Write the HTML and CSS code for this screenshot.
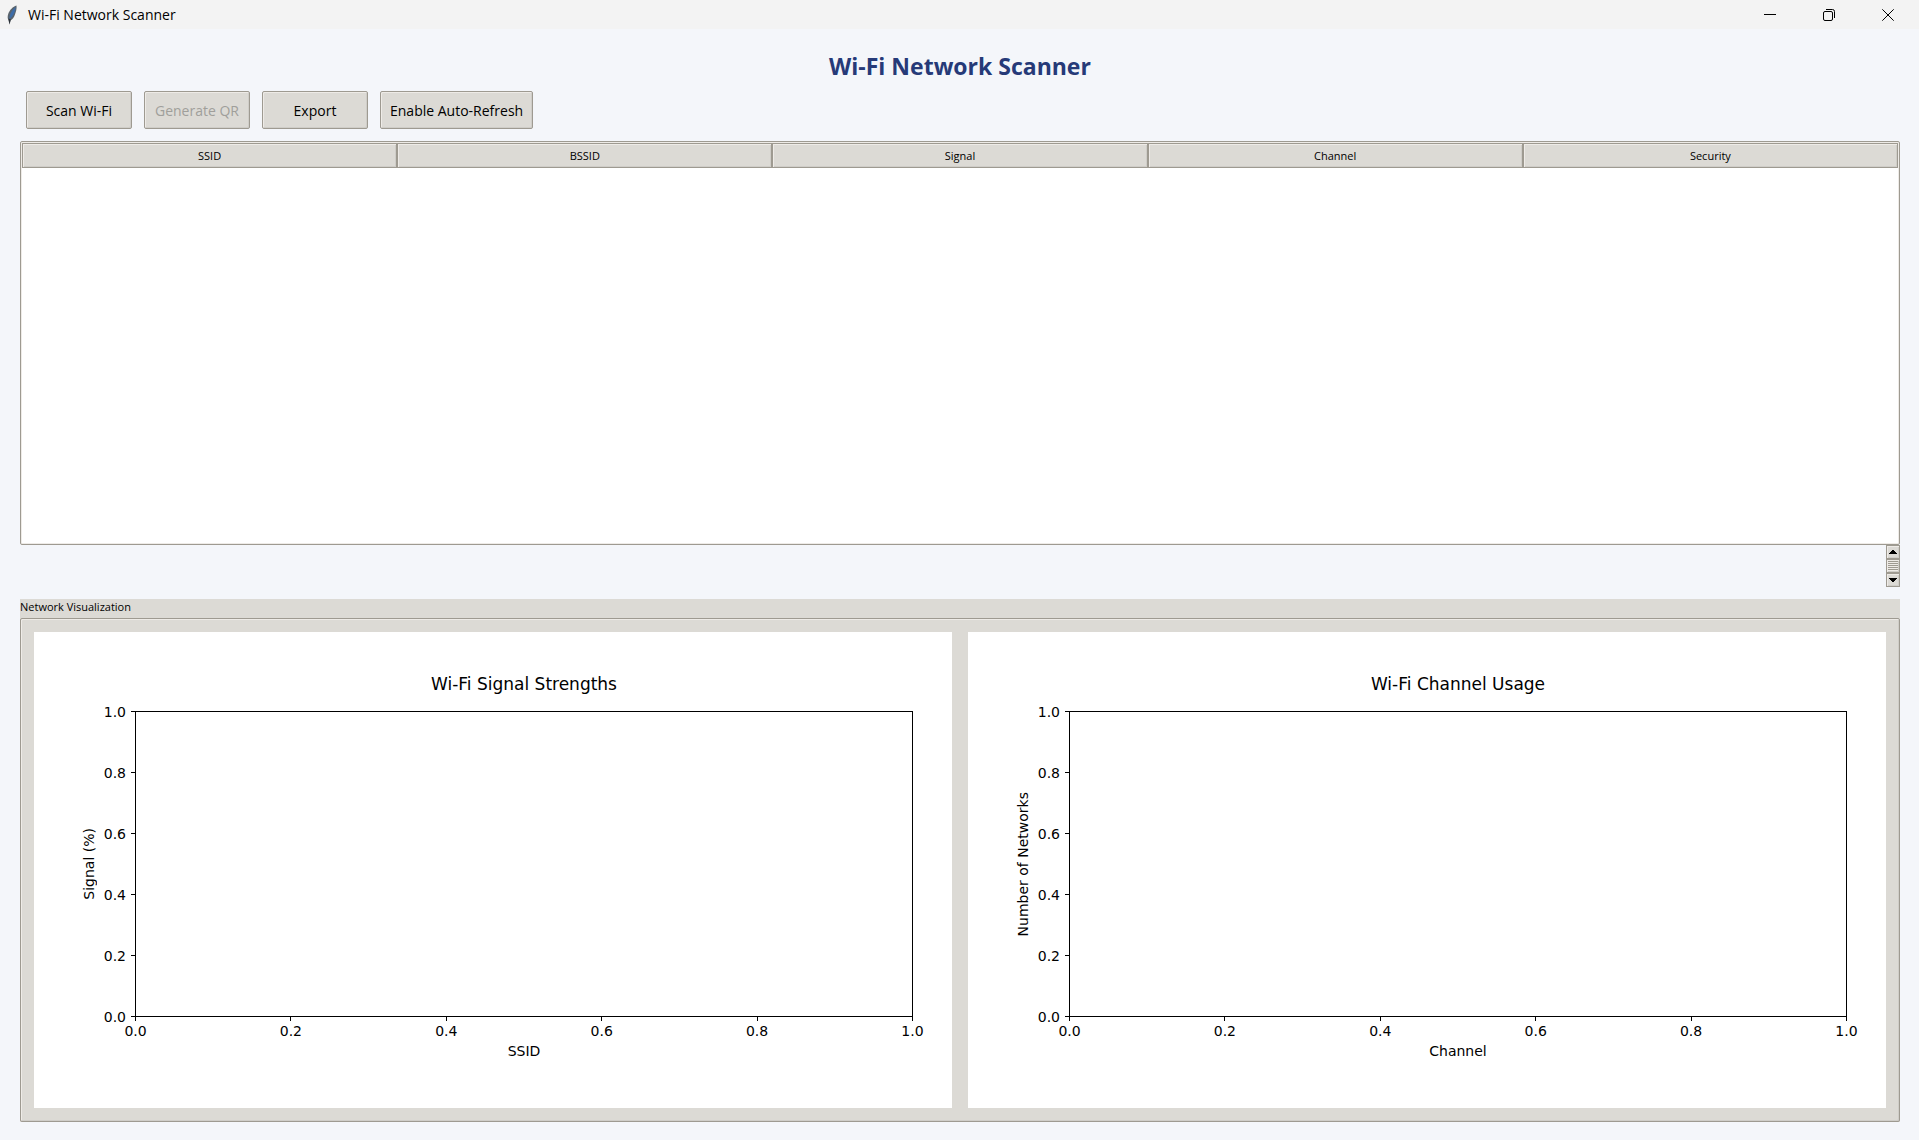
FILE: index.html
```html
<!DOCTYPE html>
<html lang="en">
<head>
<meta charset="utf-8">
<title>Wi-Fi Network Scanner</title>
<link rel="stylesheet" href="styles.css">
</head>
<body>
<header class="titlebar">
  <svg class="feather" width="12" height="20" viewBox="0 0 12 20" aria-hidden="true">
    <path d="M10.5 0.500C7 1.500 3.500 5 2.200 9C1.400 11.500 1.500 13.500 2.400 15L3.600 19.500L4.400 15.500C6.500 14.500 8 12.500 8.800 10C9.800 7 11 4 10.500 0.500Z" fill="#59636c"/>
    <path d="M9.500 2C7 4 4.800 7 3.800 10.500L3.400 14C5.500 13 7.200 10.500 8.200 8C9 6 9.800 4 9.500 2Z" fill="#3c6ca8"/>
    <path d="M2.400 13.500L3.600 19.500L4.800 14.500Z" fill="#2b3036"/>
  </svg>
  <span class="titlebar-text">Wi-Fi Network Scanner</span>
  <div class="window-controls">
    <button type="button" aria-label="Minimize"><svg width="12" height="12" viewBox="0 0 12 12"><path d="M0 5.500H12"/></svg></button>
    <button type="button" aria-label="Restore"><svg width="12" height="12" viewBox="0 0 12 12"><rect x="0.500" y="2.500" width="9" height="9" rx="1.500"/><path d="M3 0.500H9.500A2 2 0 0 1 11.500 2.500V9"/></svg></button>
    <button type="button" aria-label="Close"><svg width="12" height="12" viewBox="0 0 12 12"><path d="M0.300 0.300L11.700 11.700M11.700 0.300L0.300 11.700"/></svg></button>
  </div>
</header>
<main class="app">
  <h1 class="heading">Wi-Fi Network Scanner</h1>
  <div class="toolbar">
    <button type="button" class="tool">Scan Wi-Fi</button>
    <button type="button" class="tool" disabled>Generate QR</button>
    <button type="button" class="tool">Export</button>
    <button type="button" class="tool">Enable Auto-Refresh</button>
  </div>
  <div class="tree">
    <table class="networks">
      <thead>
        <tr><th scope="col">SSID</th><th scope="col">BSSID</th><th scope="col">Signal</th><th scope="col">Channel</th><th scope="col">Security</th></tr>
      </thead>
      <tbody></tbody>
    </table>
  </div>
  <div class="scrollbar">
    <button type="button" aria-label="Scroll up"><svg width="8" height="4" viewBox="0 0 8 4" shape-rendering="crispEdges"><path d="M3 0H5V1H6V2H7V3H8V4H0V3H1V2H2V1H3Z"/></svg></button>
    <div class="thumb"></div>
    <button type="button" aria-label="Scroll down"><svg width="8" height="4" viewBox="0 0 8 4" shape-rendering="crispEdges"><path d="M3 4H5V3H6V2H7V1H8V0H0V1H1V2H2V3H3Z"/></svg></button>
  </div>
  <section class="visualization">
    <h2 class="group-label">Network Visualization</h2>
    <div class="charts">
      <figure class="chart">
        <figcaption class="chart-title">Wi-Fi Signal Strengths</figcaption>
        <div class="y-label">Signal (%)</div>
        <ol class="y-ticks"><li>1.0</li><li>0.8</li><li>0.6</li><li>0.4</li><li>0.2</li><li>0.0</li></ol>
        <div class="axes"></div>
        <ol class="x-ticks"><li>0.0</li><li>0.2</li><li>0.4</li><li>0.6</li><li>0.8</li><li>1.0</li></ol>
        <div class="x-label">SSID</div>
      </figure>
      <figure class="chart">
        <figcaption class="chart-title">Wi-Fi Channel Usage</figcaption>
        <div class="y-label">Number of Networks</div>
        <ol class="y-ticks"><li>1.0</li><li>0.8</li><li>0.6</li><li>0.4</li><li>0.2</li><li>0.0</li></ol>
        <div class="axes"></div>
        <ol class="x-ticks"><li>0.0</li><li>0.2</li><li>0.4</li><li>0.6</li><li>0.8</li><li>1.0</li></ol>
        <div class="x-label">Channel</div>
      </figure>
    </div>
  </section>
</main>
</body>
</html>
```
FILE: styles.css
```css
:root {
  --face: #dcdad5;
  --line: #9e9a91;
  --light: #eeebe7;
  --dark: #cfcdc8;
}

* { box-sizing: border-box; }

body {
  margin: 0;
  min-height: 100vh;
  display: flex;
  flex-direction: column;
  background: #f4f6fa;
  color: #000;
  font-family: "Open Sans", "Noto Sans", sans-serif;
  font-size: 12px;
}

button { font: inherit; color: inherit; }

/* Window title bar */
.titlebar {
  display: flex;
  align-items: center;
  height: 29px;
  padding: 0 2px 0 6px;
  background: #f3f3f3;
}
.titlebar-text {
  margin-left: 10px;
  font-size: 14px;
  line-height: 28px;
}
.window-controls {
  display: flex;
  align-self: stretch;
  margin-left: auto;
}
.window-controls button {
  display: flex;
  align-items: center;
  justify-content: center;
  width: 59px;
  padding: 0;
  border: 0;
  background: none;
}
.window-controls svg {
  fill: none;
  stroke: #000;
}

.app {
  flex: 1;
  display: flex;
  flex-direction: column;
  padding: 20px 19px 18px 20px;
}
.heading {
  margin: 0;
  color: #263a78;
  font-size: 23px;
  line-height: 34px;
  font-weight: 700;
  text-align: center;
}

/* Toolbar */
.toolbar {
  display: flex;
  gap: 12px;
  padding: 8px 6px 12px;
}
.tool {
  min-width: 106px;
  height: 38px;
  padding: 0 9px;
  border: 1px solid var(--line);
  border-radius: 2px;
  background: var(--face);
  box-shadow: inset 1px 1px var(--light), inset -1px -1px var(--dark);
  font-size: 14px;
}
.tool:disabled { color: #a09f9b; }

/* Network list */
.tree {
  min-height: 404px;
  padding: 1px;
  border: 1px solid var(--line);
  border-radius: 2px;
  background: #fff;
  box-shadow: inset 0 0 0 1px var(--light);
}
.networks {
  width: 100%;
  table-layout: fixed;
  border-collapse: separate;
  border-spacing: 0;
}
.networks th {
  height: 25px;
  padding: 0;
  border: 1px solid var(--line);
  background: var(--face);
  box-shadow: inset 1px 1px var(--light), inset -1px -1px var(--dark);
  font-size: 11px;
  font-weight: 400;
}

.scrollbar {
  align-self: flex-end;
  display: grid;
  width: 14px;
  grid-auto-rows: 14px;
  background: var(--line);
}
.scrollbar button,
.thumb {
  display: flex;
  align-items: center;
  justify-content: center;
  padding: 0;
  border: 1px solid var(--line);
  background: var(--face);
  box-shadow: inset 1px 1px var(--light), inset -1px -1px var(--dark);
}
.thumb {
  background: repeating-linear-gradient(var(--light) 0 1px, var(--line) 1px 2px);
}

/* Charts */
.visualization {
  flex: 1;
  display: flex;
  flex-direction: column;
  margin-top: 12px;
  background: var(--face);
}
.group-label {
  margin: 0;
  height: 19px;
  font-size: 11px;
  line-height: 16px;
  font-weight: 400;
}
.charts {
  flex: 1;
  display: grid;
  grid-template-columns: 1fr 1fr;
  gap: 16px;
  padding: 13px;
  border: 1px solid var(--line);
  border-radius: 2px;
  box-shadow: inset 1px 1px var(--light), inset -1px -1px var(--dark);
}
.chart {
  display: grid;
  grid-template-columns: 46px 18px 37px 1fr 39px;
  grid-template-rows: 79px minmax(306px, 1fr) 24px 20px 47px;
  margin: 0;
  background: #fff;
  font-family: "DejaVu Sans", sans-serif;
  font-size: 14px;
  line-height: 20px;
}
.chart-title {
  grid-area: 1 / 4;
  align-self: end;
  padding-bottom: 15px;
  font-size: 17px;
  line-height: 24px;
  text-align: center;
}
.y-label {
  grid-area: 2 / 2;
  place-self: center;
  writing-mode: vertical-rl;
  rotate: 180deg;
  line-height: 18px;
}
.axes {
  grid-area: 2 / 4;
  border: 1px solid #000;
}
.x-label {
  grid-area: 4 / 4;
  text-align: center;
}
.y-ticks,
.x-ticks {
  display: flex;
  justify-content: space-between;
  margin: 0;
  padding: 0;
  list-style: none;
}
.y-ticks {
  grid-area: 2 / 3;
  flex-direction: column;
}
.y-ticks li {
  display: flex;
  align-items: center;
  justify-content: flex-end;
  gap: 5px;
  height: 1px;
}
.y-ticks li::after {
  content: "";
  width: 4px;
  height: 1px;
  background: #000;
}
.x-ticks { grid-area: 3 / 4; }
.x-ticks li {
  display: flex;
  flex-direction: column;
  align-items: center;
  width: 1px;
}
.x-ticks li::before {
  content: "";
  width: 1px;
  height: 4px;
  background: #000;
}
```
